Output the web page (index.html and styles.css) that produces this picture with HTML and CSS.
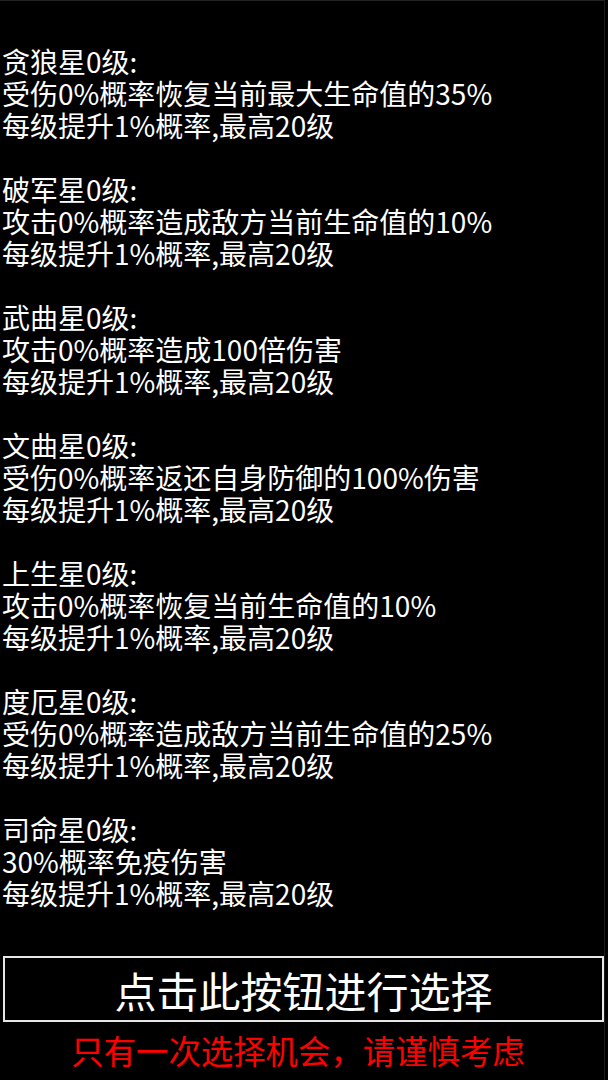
FILE: index.html
```html
<!DOCTYPE html>
<html lang="zh-CN">
<head>
<meta charset="utf-8">
<title>星宿选择</title>
<link rel="stylesheet" href="styles.css">
</head>
<body>
<div class="screen">
  <div class="list">
    <div class="star">
      <div class="line">贪狼星0级:</div>
      <div class="line">受伤0%概率恢复当前最大生命值的35%</div>
      <div class="line">每级提升1%概率,最高20级</div>
    </div>
    <div class="star">
      <div class="line">破军星0级:</div>
      <div class="line">攻击0%概率造成敌方当前生命值的10%</div>
      <div class="line">每级提升1%概率,最高20级</div>
    </div>
    <div class="star">
      <div class="line">武曲星0级:</div>
      <div class="line">攻击0%概率造成100倍伤害</div>
      <div class="line">每级提升1%概率,最高20级</div>
    </div>
    <div class="star">
      <div class="line">文曲星0级:</div>
      <div class="line">受伤0%概率返还自身防御的100%伤害</div>
      <div class="line">每级提升1%概率,最高20级</div>
    </div>
    <div class="star">
      <div class="line">上生星0级:</div>
      <div class="line">攻击0%概率恢复当前生命值的10%</div>
      <div class="line">每级提升1%概率,最高20级</div>
    </div>
    <div class="star">
      <div class="line">度厄星0级:</div>
      <div class="line">受伤0%概率造成敌方当前生命值的25%</div>
      <div class="line">每级提升1%概率,最高20级</div>
    </div>
    <div class="star">
      <div class="line">司命星0级:</div>
      <div class="line">30%概率免疫伤害</div>
      <div class="line">每级提升1%概率,最高20级</div>
    </div>
  </div>
  <div class="choose">点击此按钮进行选择</div>
  <div class="warn">只有一次选择机会，请谨慎考虑</div>
</div>
</body>
</html>
```

FILE: styles.css
```css
html, body {
  margin: 0;
  padding: 0;
  background: #000;
}
body {
  width: 608px;
  height: 1080px;
  overflow: hidden;
  font-family: "Noto Sans CJK SC", "Noto Sans", sans-serif;
  color: #fff;
}
.screen {
  box-sizing: border-box;
  width: 605px;
  height: 1080px;
  border-top: 1px solid #222;
  border-right: 1px solid #1c1c1c;
  padding: 44px 0 0 3px;
}
.list {
  display: flex;
  flex-direction: column;
  gap: 32px;
}
.star {
  display: flex;
  flex-direction: column;
}
.line {
  font-size: 28px;
  line-height: 32px;
  height: 32px;
  white-space: nowrap;
  margin-left: -1px;
}
.choose {
  box-sizing: border-box;
  margin-top: 47px;
  width: 601px;
  height: 66px;
  border: 2px solid #e6e6e6;
  display: flex;
  align-items: center;
  justify-content: center;
  font-size: 42px;
  color: #fff;
}
.warn {
  text-align: center;
  font-size: 32.4px;
  line-height: 56px;
  color: #ff0000;
  margin-right: 11px;
}
```
